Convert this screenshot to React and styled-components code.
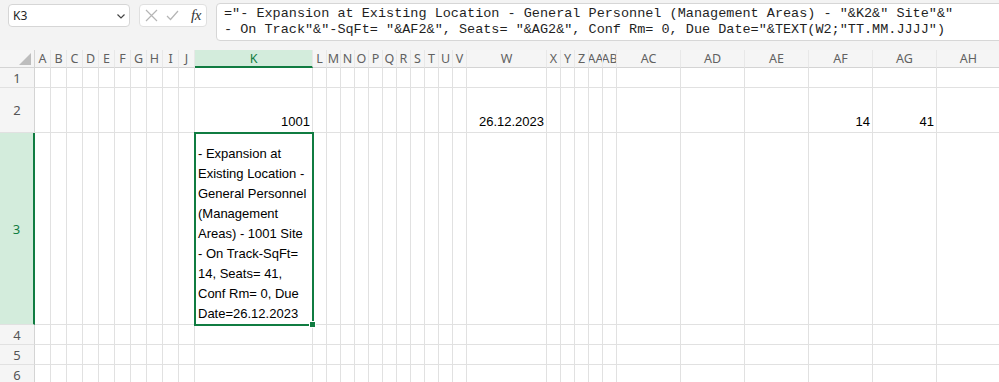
import styled, { createGlobalStyle } from "styled-components";

const GREEN = "#107c41";

const GlobalStyle = createGlobalStyle`
    body {
        margin: 0;
        background: #f3f3f3;
        overflow: hidden;
        font-family: "Liberation Sans", Arial, sans-serif;
    }
`;

const Toolbar = styled.div`
    display: flex;
    align-items: flex-start;
    gap: 9px;
    height: 50px;
    padding: 3px 0 0 8px;
    box-sizing: border-box;
    overflow: hidden;
`;

const NameBox = styled.div`
    flex: 0 0 122px;
    height: 23px;
    margin-top: 1px;
    box-sizing: border-box;
    display: flex;
    align-items: center;
    justify-content: space-between;
    padding: 0 3px 0 4px;
    background: #fff;
    border: 1px solid #d6d6d6;
    border-radius: 4px;
    font: 12px "Noto Sans", sans-serif;
    color: #242424;
`;

const EditBox = styled.div`
    flex: 0 0 68px;
    height: 23px;
    margin-top: 1px;
    box-sizing: border-box;
    display: flex;
    align-items: center;
    gap: 8px;
    padding-left: 5px;
    background: #fff;
    border: 1px solid #e0e0e0;
    border-radius: 4px;
`;

const Fx = styled.span`
    font: italic 15px "Liberation Serif", serif;
    color: #333;
    margin-left: 4px;
    letter-spacing: -0.5px;
`;

const FormulaBox = styled.div`
    flex: 0 0 800px;
    height: 38px;
    box-sizing: border-box;
    padding: 2px 7px;
    background: #fff;
    border: 1px solid #d6d6d6;
    border-radius: 4px;
    font: 13.5px "Liberation Mono", monospace;
    line-height: 15.5px;
    white-space: pre;
    color: #1f1f1f;
`;

const Sheet = styled.div`
    display: grid;
    grid-template-columns: ${p => p.$cols};
    grid-template-rows: ${p => p.$rows};
    overflow: hidden;
`;

const Corner = styled.div`
    display: flex;
    align-items: flex-end;
    justify-content: flex-end;
    padding: 0 3px 2px 0;
    background: #f5f5f5;
    border-right: 1px solid #d4d4d4;
    border-bottom: 1px solid #d4d4d4;
    box-sizing: border-box;
`;

const ColHeader = styled.div`
    display: flex;
    align-items: center;
    justify-content: center;
    overflow: hidden;
    white-space: nowrap;
    box-sizing: border-box;
    background: ${p => (p.$active ? "#d3ecdc" : "#f5f5f5")};
    color: ${p => (p.$active ? GREEN : "#616161")};
    border-right: 1px solid #e8e8e8;
    border-bottom: ${p => (p.$active ? `2px solid ${GREEN}` : "1px solid #d4d4d4")};
    font: 12.5px "Noto Sans", sans-serif;
`;

const RowHeader = styled.div`
    display: flex;
    align-items: center;
    justify-content: center;
    box-sizing: border-box;
    background: ${p => (p.$active ? "#d3ecdc" : "#f5f5f5")};
    color: ${p => (p.$active ? GREEN : "#555")};
    border-right: ${p => (p.$active ? `2px solid ${GREEN}` : "1px solid #d4d4d4")};
    border-bottom: 1px solid #e1e1e1;
    font: 13px "Noto Sans", sans-serif;
`;

const Cell = styled.div`
    display: flex;
    align-items: flex-end;
    justify-content: ${p => (p.$align === "right" ? "flex-end" : "flex-start")};
    padding: 0 2px 0 3px;
    box-sizing: border-box;
    background: #fff;
    border-right: 1px solid #e1e1e1;
    border-bottom: 1px solid #e1e1e1;
    font-size: 13px;
    line-height: 20px;
    color: #000;
    white-space: pre;
    overflow: ${p => (p.$selected ? "visible" : "hidden")};

    ${p => p.$selected && `
        position: relative;
        z-index: 1;
        outline: 2px solid ${GREEN};
        outline-offset: -1px;

        &::after {
            content: "";
            position: absolute;
            right: -4px;
            bottom: -4px;
            width: 5px;
            height: 5px;
            background: ${GREEN};
            border: 1px solid #fff;
        }
    `}
`;

const narrow = (names, width) => names.map(name => ({ name, width }));

const columns = [
    ...narrow("ABCDEFGHIJ".split(""), 16),
    { name: "K", width: 118 },
    ...narrow("LMNOPQRSTUV".split(""), 14),
    { name: "W", width: 80 },
    ...narrow(["X", "Y", "Z", "AA", "AB"], 14),
    ...narrow(["AC", "AD", "AE", "AF", "AG", "AH"], 64),
];

const rows = [
    { n: 1, h: 20 },
    { n: 2, h: 45 },
    { n: 3, h: 192 },
    { n: 4, h: 20 },
    { n: 5, h: 20 },
    { n: 6, h: 20 },
];

const values = {
    K2: { text: "1001", align: "right" },
    W2: { text: "26.12.2023", align: "right" },
    AF2: { text: "14", align: "right" },
    AG2: { text: "41", align: "right" },
    K3: {
        text: "- Expansion at\nExisting Location -\nGeneral Personnel\n(Management\nAreas) - 1001 Site\n- On Track-SqFt=\n14, Seats= 41,\nConf Rm= 0, Due\nDate=26.12.2023",
        align: "left",
    },
};

const formula =
    '="- Expansion at Existing Location - General Personnel (Management Areas) - "&K2&" Site"&"\n' +
    '- On Track"&"-SqFt= "&AF2&", Seats= "&AG2&", Conf Rm= 0, Due Date="&TEXT(W2;"TT.MM.JJJJ")';

const App = () => {
    const activeCol = "K";
    const activeRow = 3;

    return (
        <>
            <GlobalStyle />
            <Toolbar>
                <NameBox>
                    <span>K3</span>
                    <svg width="10" height="10" viewBox="0 0 10 10">
                        <polyline points="1.5,3.5 5,7 8.5,3.5" fill="none" stroke="#444" strokeWidth="1.2" />
                    </svg>
                </NameBox>
                <EditBox>
                    <svg width="13" height="13" viewBox="0 0 13 13">
                        <path d="M1 1 L12 12 M12 1 L1 12" stroke="#b5b5b5" strokeWidth="1.2" />
                    </svg>
                    <svg width="13" height="13" viewBox="0 0 13 13">
                        <polyline points="1,7 4.5,10.5 12,2" fill="none" stroke="#b5b5b5" strokeWidth="1.2" />
                    </svg>
                    <Fx>fx</Fx>
                </EditBox>
                <FormulaBox>{formula}</FormulaBox>
            </Toolbar>

            <Sheet
                $cols={["35px", ...columns.map(c => `${c.width}px`)].join(" ")}
                $rows={["18px", ...rows.map(r => `${r.h}px`)].join(" ")}
            >
                <Corner>
                    <svg width="12" height="12" viewBox="0 0 12 12">
                        <polygon points="12,0 12,12 0,12" fill="#bdbdbd" />
                    </svg>
                </Corner>
                {columns.map(c => (
                    <ColHeader key={c.name} $active={c.name === activeCol}>{c.name}</ColHeader>
                ))}

                {rows.map(r => [
                    <RowHeader key={`r${r.n}`} $active={r.n === activeRow}>{r.n}</RowHeader>,
                    ...columns.map(c => {
                        const ref = `${c.name}${r.n}`;
                        const v = values[ref];
                        return (
                            <Cell
                                key={ref}
                                $align={v ? v.align : "left"}
                                $selected={c.name === activeCol && r.n === activeRow}
                            >
                                {v ? v.text : ""}
                            </Cell>
                        );
                    }),
                ])}
            </Sheet>
        </>
    );
};

export default App;
